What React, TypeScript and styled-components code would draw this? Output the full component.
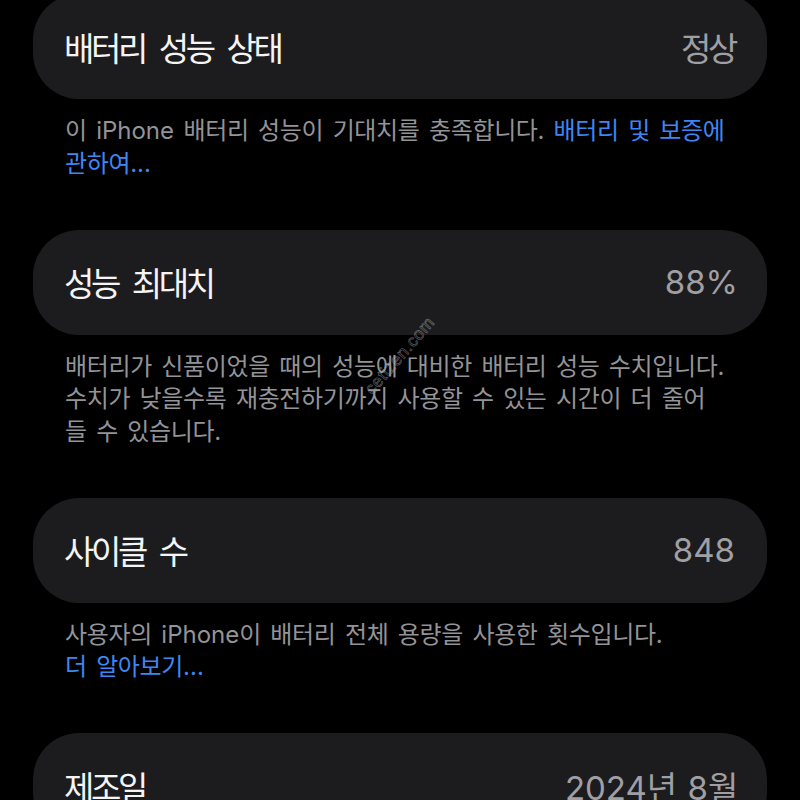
import React from "react";
import styled, { createGlobalStyle } from "styled-components";

const GlobalStyle = createGlobalStyle`
  html, body {
    margin: 0;
    padding: 0;
    background: #000;
    overflow: hidden;
  }
  body {
    font-family: "Inter", "Noto Sans CJK KR", sans-serif;
    -webkit-font-smoothing: antialiased;
  }
`;

const Page = styled.div`
  position: relative;
  margin-top: -6px;
  padding: 0 33px;
  display: flex;
  flex-direction: column;
`;

const Card = styled.div`
  height: 105px;
  box-sizing: border-box;
  background: #1c1c1e;
  border-radius: 46px;
  padding: 0 32px 0 31px;
  display: flex;
  align-items: center;
  justify-content: space-between;
`;

const Label = styled.span`
  font-family: "Inter", "Noto Sans CJK KR", sans-serif;
  font-size: 33px;
  letter-spacing: -3.4px;
  word-spacing: 8px;
  color: #f4f4f5;
  white-space: nowrap;
`;

const Value = styled(Label)`
  color: #9f9fa4;
`;

const Num = styled.span<{ $tight?: boolean }>`
  font-size: 33px;
  letter-spacing: 0;
  margin-right: ${(p) => (p.$tight ? "-3px" : "0")};
`;

const Footnote = styled.p`
  margin: 0;
  padding: 16px 32px 49.5px 32px;
  font-family: "Inter", "Noto Sans CJK KR", sans-serif;
  font-size: 24px;
  line-height: 32.5px;
  letter-spacing: -0.35px;
  word-spacing: 3px;
  color: #939398;
  white-space: nowrap;
`;

const Latin = styled.span`
  letter-spacing: 0;
`;

const Link = styled.span`
  color: #3d87f5;
`;

const Watermark = styled.span`
  position: absolute;
  left: 352px;
  top: 352px;
  font-family: "Liberation Sans", sans-serif;
  font-size: 17px;
  letter-spacing: 0.5px;
  color: transparent;
  -webkit-text-stroke: 0.6px rgba(170, 170, 175, 0.6);
  transform: rotate(-49deg);
  transform-origin: center;
  pointer-events: none;
`;

export default function App() {
  return (
    <>
      <GlobalStyle />
      <Page>
        <Card>
          <Label>배터리 성능 상태</Label>
          <Value>정상</Value>
        </Card>
        <Footnote>
          이 <Latin>iPhone</Latin> 배터리 성능이 기대치를 충족합니다.{" "}
          <Link>
            배터리 및 보증에
            <br />
            관하여<Latin>...</Latin>
          </Link>
        </Footnote>

        <Card>
          <Label>성능 최대치</Label>
          <Value>
            <Num $tight>88%</Num>
          </Value>
        </Card>
        <Footnote>
          배터리가 신품이었을 때의 성능에 대비한 배터리 성능 수치입니다.
          <br />
          수치가 낮을수록 재충전하기까지 사용할 수 있는 시간이 더 줄어
          <br />
          들 수 있습니다.
        </Footnote>

        <Card>
          <Label>사이클 수</Label>
          <Value>
            <Num>848</Num>
          </Value>
        </Card>
        <Footnote>
          사용자의 <Latin>iPhone</Latin>이 배터리 전체 용량을 사용한 횟수입니다.
          <br />
          <Link>
            더 알아보기<Latin>...</Latin>
          </Link>
        </Footnote>

        <Card>
          <Label>제조일</Label>
          <Value>
            <Num>2024</Num>년 <Num>8</Num>월
          </Value>
        </Card>
        <Watermark>cetizen.com</Watermark>
      </Page>
    </>
  );
}
